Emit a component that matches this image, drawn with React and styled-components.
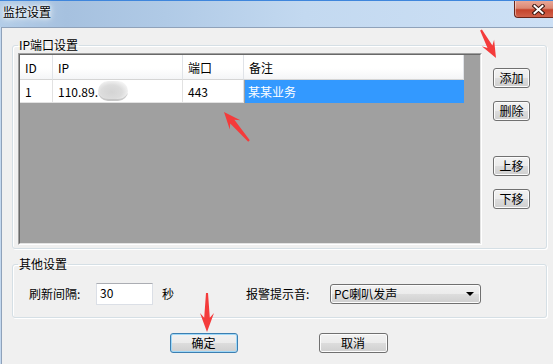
import React from "react";
import styled, { createGlobalStyle } from "styled-components";

const FONT = `"Noto Sans CJK SC", "Noto Sans", sans-serif`;

const GlobalStyle = createGlobalStyle`
  body {
    margin: 0;
    background: #f0f0f0;
    font-family: ${FONT};
    font-size: 12px;
    color: #000;
  }
`;

const columns = [
  { key: "id", title: "ID", width: 33 },
  { key: "ip", title: "IP", width: 130 },
  { key: "port", title: "端口", width: 61 },
  { key: "note", title: "备注", width: 220 },
];

const gridCols = columns.map((c) => `${c.width}px`).join(" ");

// red annotation arrow, drawn from tail (x1,y1) to tip (x2,y2)
const arrowPoints = (x1, y1, x2, y2, head, headW) => {
  const len = Math.hypot(x2 - x1, y2 - y1);
  const ux = (x2 - x1) / len;
  const uy = (y2 - y1) / len;
  const nx = -uy;
  const ny = ux;
  const at = (d, w) => [x2 - ux * d + nx * w, y2 - uy * d + ny * w];
  const pts = [
    [x1 + nx * 1, y1 + ny * 1],
    at(head * 0.75, 2.8),
    at(head, headW / 2),
    [x2, y2],
    at(head, -headW / 2),
    at(head * 0.75, -2.8),
    [x1 - nx * 1, y1 - ny * 1],
  ];
  return pts.map((p) => p.map((v) => v.toFixed(1)).join(",")).join(" ");
};

const arrows = [
  { from: [481, 30], to: [496, 58], head: 17, headW: 14 },
  { from: [249, 141], to: [224, 112], head: 17, headW: 14 },
  { from: [207, 293], to: [207, 332], head: 19, headW: 14 },
];

const App = () => {
  return (
    <Page>
      <GlobalStyle />
      <Window>
        <TitleBar>
          <Title>监控设置</Title>
          <CloseButton>
            <svg width="13" height="11" viewBox="0 0 13 11">
              <path d="M2.5 2 L10.5 9 M10.5 2 L2.5 9" stroke="#3a1610" strokeWidth="4" strokeLinecap="square" />
              <path d="M2.5 2 L10.5 9 M10.5 2 L2.5 9" stroke="#fff" strokeWidth="2" strokeLinecap="square" />
            </svg>
          </CloseButton>
        </TitleBar>
        <Client>
          <Group $top={10} $bottom={3}>
            <Legend>IP端口设置</Legend>
            <GroupBody>
              <ListView>
                <ListInner>
                  <HeaderRow>
                    {columns.map((c) => (
                      <HeaderCell key={c.key}>{c.title}</HeaderCell>
                    ))}
                  </HeaderRow>
                  <DataRow>
                    <Cell>1</Cell>
                    <Cell>
                      110.89.
                      <Redacted />
                    </Cell>
                    <Cell>443</Cell>
                    <Cell $selected>某某业务</Cell>
                  </DataRow>
                </ListInner>
              </ListView>
              <SideButtons>
                <PushButton $w={37} $mt={15}>添加</PushButton>
                <PushButton $w={37} $mt={13}>删除</PushButton>
                <PushButton $w={37} $mt={35}>上移</PushButton>
                <PushButton $w={37} $mt={13}>下移</PushButton>
              </SideButtons>
            </GroupBody>
          </Group>
          <Group $top={8} $bottom={0}>
            <Legend>其他设置</Legend>
            <SettingsRow>
              <FieldLabel $w={67}>刷新间隔:</FieldLabel>
              <TextBox>30</TextBox>
              <FieldLabel $w={84} $ml={9}>秒</FieldLabel>
              <FieldLabel $w={84}>报警提示音:</FieldLabel>
              <ComboBox>
                <span>PC喇叭发声</span>
                <ComboArrow />
              </ComboBox>
            </SettingsRow>
          </Group>
          <Footer>
            <PushButton $w={68} $default>
              确定
            </PushButton>
            <PushButton $w={69}>取消</PushButton>
          </Footer>
        </Client>
      </Window>
      <Annotations width="553" height="364" viewBox="0 0 553 364">
        {arrows.map((a, i) => (
          <polygon
            key={i}
            points={arrowPoints(a.from[0], a.from[1], a.to[0], a.to[1], a.head, a.headW)}
            fill="#f43b3b"
          />
        ))}
      </Annotations>
    </Page>
  );
};

export default App;

const Page = styled.div`
  position: relative;
  width: 553px;
  height: 364px;
  overflow: hidden;
`;

const Window = styled.div`
  display: flex;
  flex-direction: column;
  height: 100%;
  background: #c3d8ef;
`;

const TitleBar = styled.div`
  display: flex;
  align-items: flex-start;
  justify-content: space-between;
  height: 27px;
  box-sizing: border-box;
  border-top: 1px solid #3f86dc;
  background: linear-gradient(
    to right,
    #b3cde8 0%,
    #a6c1df 12%,
    #b0cae6 30%,
    #c3d9f0 55%,
    #cde0f5 100%
  );
`;

const Title = styled.div`
  padding: 4px 0 0 3px;
  font-size: 12px;
  line-height: 14px;
  color: #000;
  text-shadow: 0 0 6px #fff, 0 0 3px #fff, 0 0 10px rgba(255, 255, 255, 0.8);
`;

const CloseButton = styled.div`
  display: flex;
  align-items: center;
  justify-content: flex-start;
  width: 39px;
  height: 17px;
  padding-left: 17px;
  box-sizing: border-box;
  border: 1px solid #6a2418;
  border-top: 0;
  border-right: 0;
  border-radius: 0 0 0 4px;
  background: linear-gradient(#e8a797 0%, #dc8873 45%, #c5442c 55%, #d0614a 100%);
  box-shadow: inset 1px 0 0 rgba(255, 255, 255, 0.45);
`;

const Client = styled.div`
  flex: 1;
  display: flex;
  flex-direction: column;
  margin-left: 1px;
  border-top: 1px solid #8fa2ba;
  border-left: 1px solid #8fa2ba;
  background: #f0f0f0;
`;

const Group = styled.fieldset`
  margin: ${({ $top }) => $top}px 6px 0 10px;
  padding: 1px 15px ${({ $bottom }) => $bottom}px 5px;
  min-width: 0;
  border: 1px solid #d5dfe5;
  border-radius: 3px;
  box-shadow: inset 1px 1px 0 #fff, 1px 1px 0 #fff;
`;

const Legend = styled.legend`
  padding: 0 1px;
  font-size: 12px;
  line-height: 14px;
`;

const GroupBody = styled.div`
  display: flex;
  align-items: flex-start;
`;

const ListView = styled.div`
  width: 464px;
  height: 192px;
  box-sizing: border-box;
  border: 1px solid;
  border-color: #a0a0a0 #fff #fff #a0a0a0;
`;

const ListInner = styled.div`
  height: 100%;
  box-sizing: border-box;
  border: 1px solid;
  border-color: #696969 #e3e3e3 #e3e3e3 #696969;
  background: #a0a0a0;
`;

const HeaderRow = styled.div`
  display: grid;
  grid-template-columns: ${gridCols};
  width: max-content;
  height: 25px;
`;

const HeaderCell = styled.div`
  padding: 2px 0 0 5px;
  box-sizing: border-box;
  line-height: 22px;
  background: linear-gradient(#fff 0%, #fff 55%, #f4f5f7 100%);
  border-right: 1px solid #e0e3e8;
  border-bottom: 1px solid #d5d5d5;
`;

const DataRow = styled.div`
  display: grid;
  grid-template-columns: ${gridCols};
  width: max-content;
  height: 23px;
`;

const Cell = styled.div`
  display: flex;
  align-items: center;
  padding-left: ${({ $selected }) => ($selected ? 3 : 5)}px;
  box-sizing: border-box;
  background: ${({ $selected }) => ($selected ? "#3399ff" : "#fff")};
  color: ${({ $selected }) => ($selected ? "#fff" : "#000")};
  border-right: 1px solid ${({ $selected }) => ($selected ? "#3399ff" : "#e2e2e2")};
  border-bottom: 1px solid ${({ $selected }) => ($selected ? "#3399ff" : "#e2e2e2")};
  margin-left: ${({ $selected }) => ($selected ? 1 : 0)}px;
  white-space: nowrap;
`;

const Redacted = styled.span`
  display: inline-block;
  width: 30px;
  height: 20px;
  border-radius: 10px;
  background: radial-gradient(ellipse at 45% 55%, #d4d4d4 0%, #dcdcdc 45%, #f3f3f3 75%, #fff 100%);
  box-shadow: inset 0 -3px 0 -1px rgba(170, 170, 170, 0.5);
  filter: blur(0.6px);
`;

const SideButtons = styled.div`
  display: flex;
  flex-direction: column;
  margin-left: 11px;
`;

const PushButton = styled.div`
  display: flex;
  align-items: center;
  justify-content: center;
  width: ${({ $w }) => $w}px;
  height: 20px;
  margin-top: ${({ $mt }) => $mt || 0}px;
  box-sizing: border-box;
  border: 1px solid ${({ $default }) => ($default ? "#3c7fb1" : "#707070")};
  border-radius: 3px;
  background: linear-gradient(#f2f2f2 0%, #ebebeb 50%, #dddddd 50%, #cfcfcf 100%);
  box-shadow: inset 0 0 0 1px ${({ $default }) => ($default ? "#9fd8f8" : "#fcfcfc")};
  font-size: 12px;
  line-height: 14px;
  cursor: default;
`;

const SettingsRow = styled.div`
  display: flex;
  align-items: center;
  padding: 11px 0 12px 11px;
`;

const FieldLabel = styled.div`
  width: ${({ $w }) => $w}px;
  margin-left: ${({ $ml }) => $ml || 0}px;
  font-size: 12px;
  line-height: 14px;
  white-space: nowrap;
`;

const TextBox = styled.div`
  width: 57px;
  height: 22px;
  padding: 2px 0 0 3px;
  box-sizing: border-box;
  border: 1px solid #dbdfe6;
  border-top-color: #abadb3;
  background: #fff;
  font-size: 12px;
  line-height: 14px;
`;

const ComboBox = styled.div`
  display: flex;
  align-items: center;
  justify-content: space-between;
  width: 151px;
  height: 20px;
  padding: 0 6px 0 3px;
  box-sizing: border-box;
  border: 1px solid #707070;
  border-radius: 3px;
  background: linear-gradient(#f2f2f2 0%, #ebebeb 50%, #dddddd 50%, #cfcfcf 100%);
  box-shadow: inset 0 0 0 1px #fcfcfc;
  font-size: 12px;
  line-height: 14px;
`;

const ComboArrow = styled.span`
  width: 0;
  height: 0;
  border-left: 4px solid transparent;
  border-right: 4px solid transparent;
  border-top: 4px solid #000;
`;

const Footer = styled.div`
  display: flex;
  justify-content: center;
  gap: 81px;
  margin-top: 15px;
  padding-left: 2px;
`;

const Annotations = styled.svg`
  position: absolute;
  left: 0;
  top: 0;
  pointer-events: none;
`;
